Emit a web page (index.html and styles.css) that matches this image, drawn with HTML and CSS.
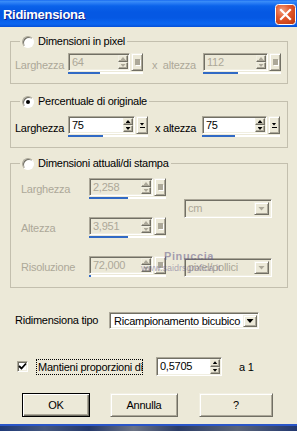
FILE: index.html
```html
<!DOCTYPE html>
<html lang="it">
<head>
<meta charset="utf-8">
<title>Ridimensiona</title>
<link rel="stylesheet" href="styles.css">
</head>
<body>
<div class="win">
  <div class="titlebar">
    <span class="title">Ridimensiona</span>
    <span class="close">
      <svg width="21" height="21" viewBox="0 0 21 21">
        <defs>
          <radialGradient id="cg" cx="35%" cy="30%" r="85%">
            <stop offset="0" stop-color="#F3A080"/>
            <stop offset="0.45" stop-color="#E2582C"/>
            <stop offset="1" stop-color="#C13A12"/>
          </radialGradient>
        </defs>
        <rect x="0.5" y="0.5" width="20" height="20" rx="3" fill="url(#cg)" stroke="#fff"/>
        <path d="M6 6L15 15M15 6L6 15" stroke="#fff" stroke-width="2.2" stroke-linecap="square"/>
      </svg>
    </span>
  </div>

  <div class="content">
    <fieldset class="group g1">
      <legend><span class="lgd"><span class="radio"></span>Dimensioni in pixel</span></legend>
      <div class="inner row">
        <span class="lbl dis lw">Larghezza</span>
        <div class="spin w75">
          <div class="ctl">
            <div class="field"><span class="val">64</span><span class="ud"><i class="up"><b class="tu"></b></i><i class="dn"><b class="td"></b></i></span></div>
            <span class="dd"><i class="sq"></i></span>
          </div>
          <div class="bar"><b style="width:43%"></b></div>
        </div>
        <span class="lbl dis xa1">x&nbsp; altezza</span>
        <div class="spin w78">
          <div class="ctl">
            <div class="field"><span class="val">112</span><span class="ud"><i class="up"><b class="tu"></b></i><i class="dn"><b class="td"></b></i></span></div>
            <span class="dd"><i class="sq"></i></span>
          </div>
          <div class="bar"><b style="width:45%"></b></div>
        </div>
      </div>
    </fieldset>

    <fieldset class="group g2">
      <legend><span class="lgd"><span class="radio on"></span>Percentuale di originale</span></legend>
      <div class="inner row">
        <span class="lbl lw">Larghezza</span>
        <div class="spin w80 en">
          <div class="ctl">
            <div class="field"><span class="val">75</span><span class="ud"><i class="up"><b class="tu"></b></i><i class="dn"><b class="td"></b></i></span></div>
            <span class="dd"><i class="menu"><b class="td"></b><b class="ln"></b></i></span>
          </div>
          <div class="bar"><b style="width:44%"></b></div>
        </div>
        <span class="lbl xa2">x altezza</span>
        <div class="spin w78 en">
          <div class="ctl">
            <div class="field"><span class="val">75</span><span class="ud"><i class="up"><b class="tu"></b></i><i class="dn"><b class="td"></b></i></span></div>
            <span class="dd"><i class="menu"><b class="td"></b><b class="ln"></b></i></span>
          </div>
          <div class="bar"><b style="width:42%"></b></div>
        </div>
      </div>
    </fieldset>

    <fieldset class="group g3">
      <legend><span class="lgd"><span class="radio"></span>Dimensioni attuali/di stampa</span></legend>
      <div class="inner cols">
        <div class="lcol">
          <div class="row">
            <span class="lbl dis lw3">Larghezza</span>
            <div class="spin w77">
              <div class="ctl">
                <div class="field"><span class="val">2,258</span><span class="ud"><i class="up"><b class="tu"></b></i><i class="dn"><b class="td"></b></i></span></div>
                <span class="dd"><i class="sq"></i></span>
              </div>
              <div class="bar"><b style="width:50%"></b></div>
            </div>
          </div>
          <div class="row">
            <span class="lbl dis lw3">Altezza</span>
            <div class="spin w77">
              <div class="ctl">
                <div class="field"><span class="val">3,951</span><span class="ud"><i class="up"><b class="tu"></b></i><i class="dn"><b class="td"></b></i></span></div>
                <span class="dd"><i class="sq"></i></span>
              </div>
              <div class="bar"><b style="width:50%"></b></div>
            </div>
          </div>
          <div class="row">
            <span class="lbl dis lw3">Risoluzione</span>
            <div class="spin w77">
              <div class="ctl">
                <div class="field"><span class="val">72,000</span><span class="ud"><i class="up"><b class="tu"></b></i><i class="dn"><b class="td"></b></i></span></div>
                <span class="dd"><i class="sq"></i></span>
              </div>
              <div class="bar"><b style="width:3%"></b></div>
            </div>
          </div>
        </div>
        <div class="rcol">
          <div class="sel dis sel-cm"><span class="t">cm</span><span class="arr"><b class="ta"></b></span></div>
          <div class="sel dis sel-pp"><span class="t">pixel/pollici</span><span class="arr"><b class="ta"></b></span></div>
        </div>
      </div>
    </fieldset>

    <div class="tipo">
      <span class="tlbl">Ridimensiona tipo</span>
      <div class="sel en sel-tipo"><span class="t">Ricampionamento bicubico</span><span class="arr"><b class="ta"></b></span></div>
    </div>

    <div class="chkrow">
      <span class="check">
        <svg width="9" height="9" viewBox="0 0 9 9"><path d="M1 4L3.5 6.5L8 1.5" fill="none" stroke="#000" stroke-width="1.8"/></svg>
      </span>
      <span class="focus">Mantieni proporzioni di</span>
      <div class="spin w66 en">
        <div class="ctl tall">
          <div class="field white"><span class="val">0,5705</span><span class="ud"><i class="up"><b class="tu"></b></i><i class="dn"><b class="td"></b></i></span></div>
        </div>
      </div>
      <span class="a1">a 1</span>
    </div>

    <div class="buttons">
      <span class="btn def">OK</span>
      <span class="btn b2">Annulla</span>
      <span class="btn b3">?</span>
    </div>
  </div>

  <div class="desk"></div>

  <span class="wm wm1">Pinuccia</span>
  <span class="wm wm2">www.saidrsgrafica.it</span>
</div>
</body>
</html>
```

FILE: styles.css
```css
* { box-sizing: border-box; }
html, body { margin: 0; padding: 0; }
body {
  width: 297px;
  height: 431px;
  overflow: hidden;
  background: #ECE9D8;
  font-family: "Liberation Sans", Arial, sans-serif;
  font-size: 11px;
  letter-spacing: -0.25px;
  color: #000;
}
.win { position: relative; width: 297px; height: 431px; }

/* title bar */
.titlebar {
  height: 27px;
  display: flex;
  align-items: center;
  justify-content: space-between;
  padding: 0 1px 0 3px;
  background: linear-gradient(180deg, #0b5ded 0px, #3d8ff8 1px, #2a7ef5 3px, #0a62ea 6px, #0558e3 12px, #0558e3 18px, #0a63ee 22px, #0c66f0 24px, #0650d8 27px);
}
.title {
  color: #fff;
  font-weight: bold;
  font-size: 13px;
  letter-spacing: -0.3px;
  text-shadow: 1px 1px 0 #0a1e8c;
  padding-top: 2px;
}
.close { display: block; width: 21px; height: 21px; margin-top: 2px; }
.close svg { display: block; }

.content { padding: 8px 9px 0 10px; }

/* group boxes */
.group {
  margin: 0;
  padding: 0;
  border: 1px solid #C3BFAE;
  min-width: 0;
}
.group legend {
  margin-left: 9px;
  padding: 0 2px;
  line-height: 13px;
}
.lgd { display: flex; align-items: center; gap: 4px; height: 13px; }
.g2 { margin-top: 11px; }
.g3 { margin-top: 9px; }

.radio {
  position: relative;
  width: 12px;
  height: 12px;
  border-radius: 50%;
  background: #fff;
  border: 1px solid;
  border-color: #ACA899 #fff #fff #ACA899;
  box-shadow: inset 1px 1px 0 #716F64;
  flex: none;
}
.radio.on::after {
  content: "";
  position: absolute;
  left: 3px;
  top: 3px;
  width: 4px;
  height: 4px;
  border-radius: 50%;
  background: #000;
}

.inner.row { display: flex; align-items: flex-start; }
.g1 .inner { padding: 5px 0 9px 4px; }
.g2 .inner { padding: 8px 0 10px 4px; }
.g3 .inner { padding: 8px 0 10px 10px; }

.row { display: flex; align-items: flex-start; }
.lbl { padding-top: 6px; line-height: 13px; white-space: nowrap; }
.dis { color: #ACA899; }
.lw { width: 53px; }
.xa1 { margin-left: 9px; width: 51px; }
.xa2 { margin-left: 7px; width: 47px; }
.lw3 { width: 68px; padding-top: 5px; }

/* spin edit */
.spin { display: flex; flex-direction: column; }
.w75 { width: 75px; }
.w77 { width: 77px; }
.w78 { width: 78px; }
.w80 { width: 80px; }
.w66 { width: 66px; }
.ctl { display: flex; gap: 1px; height: 18px; }
.ctl.tall { height: 19px; }
.field {
  flex: 1;
  display: flex;
  align-items: stretch;
  border: 1px solid;
  border-color: #ACA899 #fff #fff #ACA899;
  box-shadow: inset 1px 1px 0 #716F64, inset -1px -1px 0 #F1EFE2;
  padding: 1px 1px 1px 2px;
  background: #ECE9D8;
}
.en .field { background: #fff; }
.val { flex: 1; line-height: 14px; color: #ACA899; padding-left: 1px; }
.en .val { color: #000; }
.ud { display: flex; flex-direction: column; width: 10px; }
.ud i {
  flex: 1;
  display: flex;
  align-items: center;
  justify-content: center;
  background: #ECE9D8;
  border: 1px solid;
  border-color: #F1EFE2 #716F64 #716F64 #F1EFE2;
  box-shadow: inset -1px -1px 0 #ACA899;
}
.tu, .td {
  display: block;
  width: 5px;
  height: 3px;
  background: #ACA899;
}
.tu { clip-path: polygon(50% 0, 100% 100%, 0 100%); }
.td { clip-path: polygon(0 0, 100% 0, 50% 100%); }
.en .tu, .en .td { background: #000; }

.dd {
  width: 12px;
  display: flex;
  align-items: center;
  justify-content: center;
  background: #ECE9D8;
  border: 1px solid;
  border-color: #F1EFE2 #716F64 #716F64 #F1EFE2;
  box-shadow: inset 1px 1px 0 #fff, inset -1px -1px 0 #ACA899;
}
.sq {
  display: block;
  width: 5px;
  height: 6px;
  background: #ACA899;
  box-shadow: 1px 1px 0 #fff;
}
.menu { display: flex; flex-direction: column; align-items: center; gap: 1px; }
.menu .td { background: #000; }
.ln { display: block; width: 5px; height: 1px; background: #000; }

.bar { display: flex; height: 2px; margin-top: 1px; background: #fff; }
.bar b { display: block; height: 2px; background: #316AC5; }

/* group 3 columns */
.cols { display: flex; }
.lcol { display: flex; flex-direction: column; gap: 18px; }
.rcol { display: flex; flex-direction: column; margin-left: 18px; width: 88px; }
.sel-cm { margin-top: 21px; }
.sel-pp { margin-top: 40px; }

/* combo */
.sel {
  display: flex;
  height: 19px;
  border: 1px solid;
  border-color: #ACA899 #fff #fff #ACA899;
  box-shadow: inset 1px 1px 0 #716F64, inset -1px -1px 0 #F1EFE2;
  padding: 2px;
  background: #ECE9D8;
}
.sel .t { flex: 1; line-height: 13px; padding-left: 1px; white-space: nowrap; overflow: hidden; }
.sel.dis .t { color: #ACA899; }
.sel .arr {
  width: 15px;
  display: flex;
  align-items: center;
  justify-content: center;
  background: #ECE9D8;
  border: 1px solid;
  border-color: #F1EFE2 #716F64 #716F64 #F1EFE2;
  box-shadow: inset 1px 1px 0 #fff, inset -1px -1px 0 #ACA899;
}
.ta {
  display: block;
  width: 7px;
  height: 4px;
  background: #ACA899;
  clip-path: polygon(0 0, 100% 0, 50% 100%);
}
.sel.en { background: #fff; }
.sel.en .ta { background: #000; }

.tipo { display: flex; align-items: center; margin-top: 24px; padding-left: 5px; }
.tlbl { width: 94px; line-height: 13px; white-space: nowrap; }
.sel-tipo { width: 150px; height: 17px; padding: 2px 1px 1px 2px; }
.sel-tipo .t { line-height: 12px; padding-left: 2px; }
.sel-tipo .arr { width: 14px; }

/* checkbox row */
.chkrow { display: flex; align-items: center; height: 19px; margin-top: 28px; padding-left: 7px; }
.check {
  width: 11px;
  height: 11px;
  display: flex;
  align-items: center;
  justify-content: center;
  background: #fff;
  border: 1px solid;
  border-color: #ACA899 #fff #fff #ACA899;
  box-shadow: inset 1px 1px 0 #716F64, inset -1px -1px 0 #F1EFE2;
  margin-right: 8px;
  flex: none;
}
.check svg { display: block; }
.focus {
  width: 107px;
  border: 1px dotted #000;
  padding: 0 1px;
  line-height: 14px;
  white-space: nowrap;
}
.chkrow .spin { margin-left: 13px; }
.field.white { background: #fff; }
.a1 { margin-left: 17px; }

/* buttons */
.buttons { display: flex; margin-top: 17px; padding-left: 12px; }
.btn {
  height: 24px;
  width: 68px;
  display: flex;
  align-items: center;
  justify-content: center;
  background: #ECE9D8;
  border: 1px solid;
  border-color: #F1EFE2 #716F64 #716F64 #F1EFE2;
  box-shadow: inset 1px 1px 0 #fff, inset -1px -1px 0 #ACA899;
}
.btn.def {
  border-color: #000;
  box-shadow: inset 1px 1px 0 #fff, inset -1px -1px 0 #716F64, inset -2px -2px 0 #ACA899;
}
.b2 { margin-left: 20px; }
.b3 { margin-left: 21px; width: 74px; }

.desk {
  margin-top: 7px;
  height: 7px;
  background:
    linear-gradient(180deg, #2a56c8 0, #2a56c8 2px, rgba(0,0,0,0) 2px),
    linear-gradient(90deg, #1f3a78 0, #45577e 15%, #24386a 30%, #6b7385 45%, #2b3c66 60%, #5a6478 80%, #223870 100%);
}

/* watermark overlay */
.wm { position: absolute; white-space: nowrap; letter-spacing: 0; }
.wm1 { left: 164px; top: 250px; font-size: 11px; font-weight: bold; letter-spacing: 0.6px; color: rgba(100, 90, 140, 0.55); }
.wm2 { left: 141px; top: 263px; font-size: 9px; color: rgba(100, 90, 140, 0.5); }
```
